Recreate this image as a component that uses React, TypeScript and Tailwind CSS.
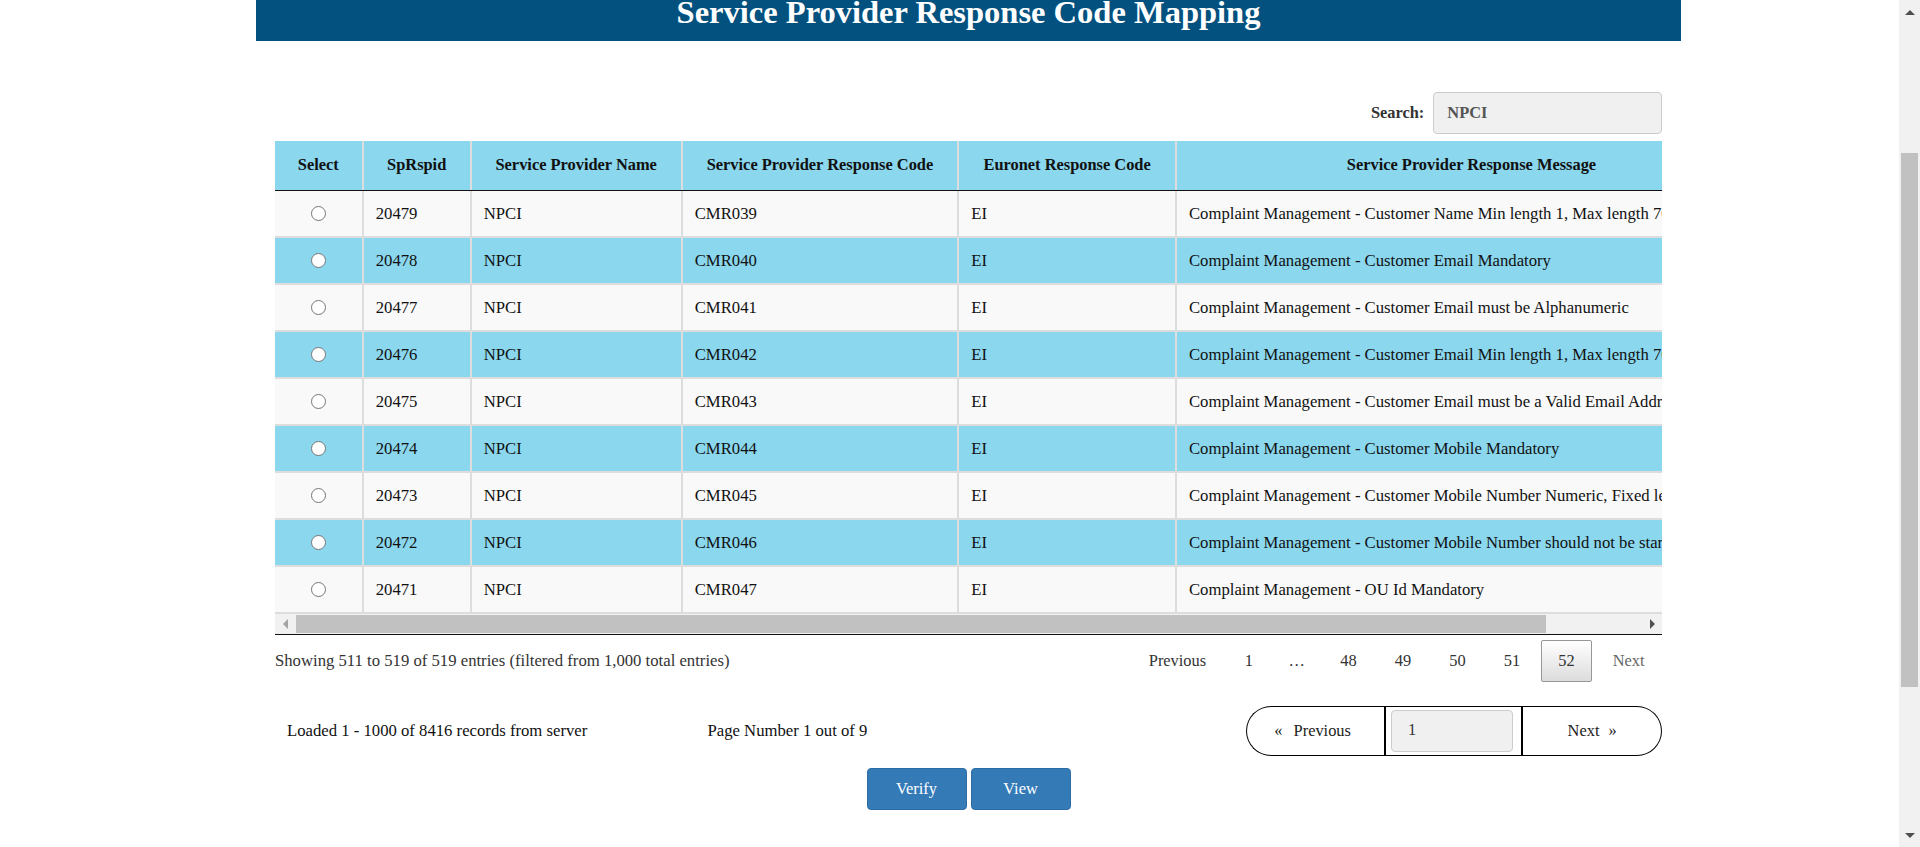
import React from 'react';

const rows = [
  { id: '20479', code: 'CMR039', msg: 'Complaint Management - Customer Name Min length 1, Max length 70' },
  { id: '20478', code: 'CMR040', msg: 'Complaint Management - Customer Email Mandatory' },
  { id: '20477', code: 'CMR041', msg: 'Complaint Management - Customer Email must be Alphanumeric' },
  { id: '20476', code: 'CMR042', msg: 'Complaint Management - Customer Email Min length 1, Max length 70' },
  { id: '20475', code: 'CMR043', msg: 'Complaint Management - Customer Email must be a Valid Email Address' },
  { id: '20474', code: 'CMR044', msg: 'Complaint Management - Customer Mobile Mandatory' },
  { id: '20473', code: 'CMR045', msg: 'Complaint Management - Customer Mobile Number Numeric, Fixed length 10' },
  { id: '20472', code: 'CMR046', msg: 'Complaint Management - Customer Mobile Number should not be starting with 0' },
  { id: '20471', code: 'CMR047', msg: 'Complaint Management - OU Id Mandatory' },
];

const cols = [
  { label: 'Select', w: 'w-[88.7px]' },
  { label: 'SpRspid', w: 'w-[108px]' },
  { label: 'Service Provider Name', w: 'w-[211px]' },
  { label: 'Service Provider Response Code', w: 'w-[276.6px]' },
  { label: 'Euronet Response Code', w: 'w-[217.7px]' },
  { label: 'Service Provider Response Message', w: 'w-[591px]' },
];

const Tri = ({ dir, color }: { dir: 'up' | 'down' | 'left' | 'right'; color: string }) => {
  const pts = {
    up: '0,5 5,0 10,5',
    down: '0,0 10,0 5,5',
    left: '5,0 5,10 0,5',
    right: '0,0 0,10 5,5',
  }[dir];
  const w = dir === 'up' || dir === 'down' ? 10 : 5;
  const h = dir === 'up' || dir === 'down' ? 5 : 10;
  return (
    <svg width={w} height={h} viewBox={`0 0 ${w} ${h}`}>
      <polygon points={pts} fill={color} />
    </svg>
  );
};

const PageBtn = ({ label, current }: { label: string; current?: boolean }) => (
  <span
    className={
      current
        ? 'flex h-[41.4px] w-[51.2px] items-center justify-center rounded-[2px] border border-[#979797] bg-linear-to-b from-white to-[#dcdcdc] text-[#333]'
        : 'flex h-[41.4px] w-[51.2px] items-center justify-center text-[#333]'
    }
  >
    {label}
  </span>
);

export default function App() {
  return (
    <div className="flex h-[847px] w-[1920px] overflow-hidden bg-white font-['Liberation_Serif',serif] text-[16.7px] text-[#111]">
      <div className="min-w-0 flex-1">
        <div className="ml-[256px] w-[1425px]">
          <div className="h-[41px] overflow-hidden bg-[#03517f]">
            <h2 className="whitespace-nowrap text-center text-[32.5px] font-bold leading-[25px] text-white">
              Service Provider Response Code Mapping
            </h2>
          </div>

          <div className="px-[19px]">
            <div className="mt-[51px] flex h-[42px] items-center justify-end gap-[9px]">
              <label className="text-[16.4px] font-bold text-[#333]">Search:</label>
              <input
                readOnly
                value="NPCI"
                className="h-[42px] w-[228.7px] rounded-[4px] border border-[#cccccc] bg-[#f0f0f0] pl-[13px] text-[16.4px] font-bold text-[#555] outline-none"
              />
            </div>

            <div className="mt-[7px] border-b border-[#111]">
              <div className="overflow-hidden">
                <div className="w-[1493px]">
                  <div className="flex h-[50px] border-b border-[#111] bg-[#8ad7ee] text-[16.4px] font-bold">
                    {cols.map((c) => (
                      <div
                        key={c.label}
                        className={`${c.w} flex shrink-0 items-center justify-center border-r-2 border-[#dddddd]`}
                      >
                        {c.label}
                      </div>
                    ))}
                  </div>
                  {rows.map((r, i) => (
                    <div
                      key={r.id}
                      className={
                        i % 2 === 0
                          ? 'flex h-[47px] border-b-2 border-[#dddddd] bg-[#f9f9f9]'
                          : 'flex h-[47px] border-b-2 border-[#dddddd] bg-[#8ad7ee]'
                      }
                    >
                      <div className="flex w-[88.7px] shrink-0 items-center justify-center border-r-2 border-[#dddddd]">
                        <input
                          type="radio"
                          name="sel"
                          className="h-[15px] w-[15px] appearance-none rounded-full border border-[#767676] bg-white"
                        />
                      </div>
                      <div className="flex w-[108px] shrink-0 items-center border-r-2 border-[#dddddd] pl-[12px]">{r.id}</div>
                      <div className="flex w-[211px] shrink-0 items-center border-r-2 border-[#dddddd] pl-[12px]">NPCI</div>
                      <div className="flex w-[276.6px] shrink-0 items-center border-r-2 border-[#dddddd] pl-[12px]">{r.code}</div>
                      <div className="flex w-[217.7px] shrink-0 items-center border-r-2 border-[#dddddd] pl-[12px]">EI</div>
                      <div className="flex w-[591px] shrink-0 items-center whitespace-nowrap pl-[12px]">{r.msg}</div>
                    </div>
                  ))}
                </div>
              </div>
              <div className="flex h-[20px] bg-[#f1f1f1]">
                <div className="flex w-[20.7px] items-center justify-center">
                  <Tri dir="left" color="#a3a3a3" />
                </div>
                <div className="my-[1px] w-[1250.3px] bg-[#c1c1c1]" />
                <div className="flex-1" />
                <div className="flex w-[20px] items-center justify-center">
                  <Tri dir="right" color="#505050" />
                </div>
              </div>
            </div>

            <div className="mt-[5px] flex h-[42px] items-center justify-between">
              <span className="text-[#333]">Showing 511 to 519 of 519 entries (filtered from 1,000 total entries)</span>
              <div className="flex items-center gap-[3.3px] text-[16.4px]">
                <span className="flex h-[41.4px] w-[93.1px] items-center justify-center text-[#333]">Previous</span>
                <span className="flex h-[41.4px] w-[43px] items-center justify-center text-[#333]">1</span>
                <span className="flex h-[41.4px] w-[46px] items-center justify-center text-[#333]">…</span>
                <PageBtn label="48" />
                <PageBtn label="49" />
                <PageBtn label="50" />
                <PageBtn label="51" />
                <PageBtn label="52" current />
                <span className="flex h-[41.4px] w-[66.7px] items-center justify-center text-[#666]">Next</span>
              </div>
            </div>

            <div className="mt-[24px] flex h-[50px] items-center">
              <span className="w-[432.5px] pl-[12px]">Loaded 1 - 1000 of 8416 records from server</span>
              <span>Page Number 1 out of 9</span>
              <div className="ml-auto flex h-[50px] w-[416px] text-[16.4px]">
                <div className="flex w-[138.3px] items-center justify-center gap-[11px] rounded-l-full border border-r-0 border-black pr-[6px] text-[#222]">
                  <span>«</span>
                  <span>Previous</span>
                </div>
                <div className="flex w-[139px] items-center border-x-2 border-y border-black pl-[4.7px]">
                  <input
                    readOnly
                    value="1"
                    className="h-[41.7px] w-[121.7px] rounded-[4px] border border-[#cccccc] bg-[#f0f0f0] pb-[3px] pl-[16px] text-[#333] outline-none"
                  />
                </div>
                <div className="flex flex-1 items-center justify-center gap-[9px] rounded-r-full border border-l-0 border-black text-[#222]">
                  <span>Next</span>
                  <span>»</span>
                </div>
              </div>
            </div>

            <div className="mt-[12px] flex justify-center gap-[4px] text-[16.4px]">
              <button className="h-[42px] w-[100px] rounded-[4px] border border-[#2e6da4] bg-[#337ab7] text-white">Verify</button>
              <button className="h-[42px] w-[100px] rounded-[4px] border border-[#2e6da4] bg-[#337ab7] text-white">View</button>
            </div>
          </div>
        </div>
      </div>

      <div className="flex w-[21px] shrink-0 flex-col items-center bg-[#f1f1f1]">
        <div className="flex h-[24px] items-center justify-center">
          <Tri dir="up" color="#505050" />
        </div>
        <div className="h-[129px]" />
        <div className="h-[534px] w-[17px] bg-[#c1c1c1]" />
        <div className="flex-1" />
        <div className="flex h-[24px] items-center justify-center">
          <Tri dir="down" color="#505050" />
        </div>
      </div>
    </div>
  );
}
